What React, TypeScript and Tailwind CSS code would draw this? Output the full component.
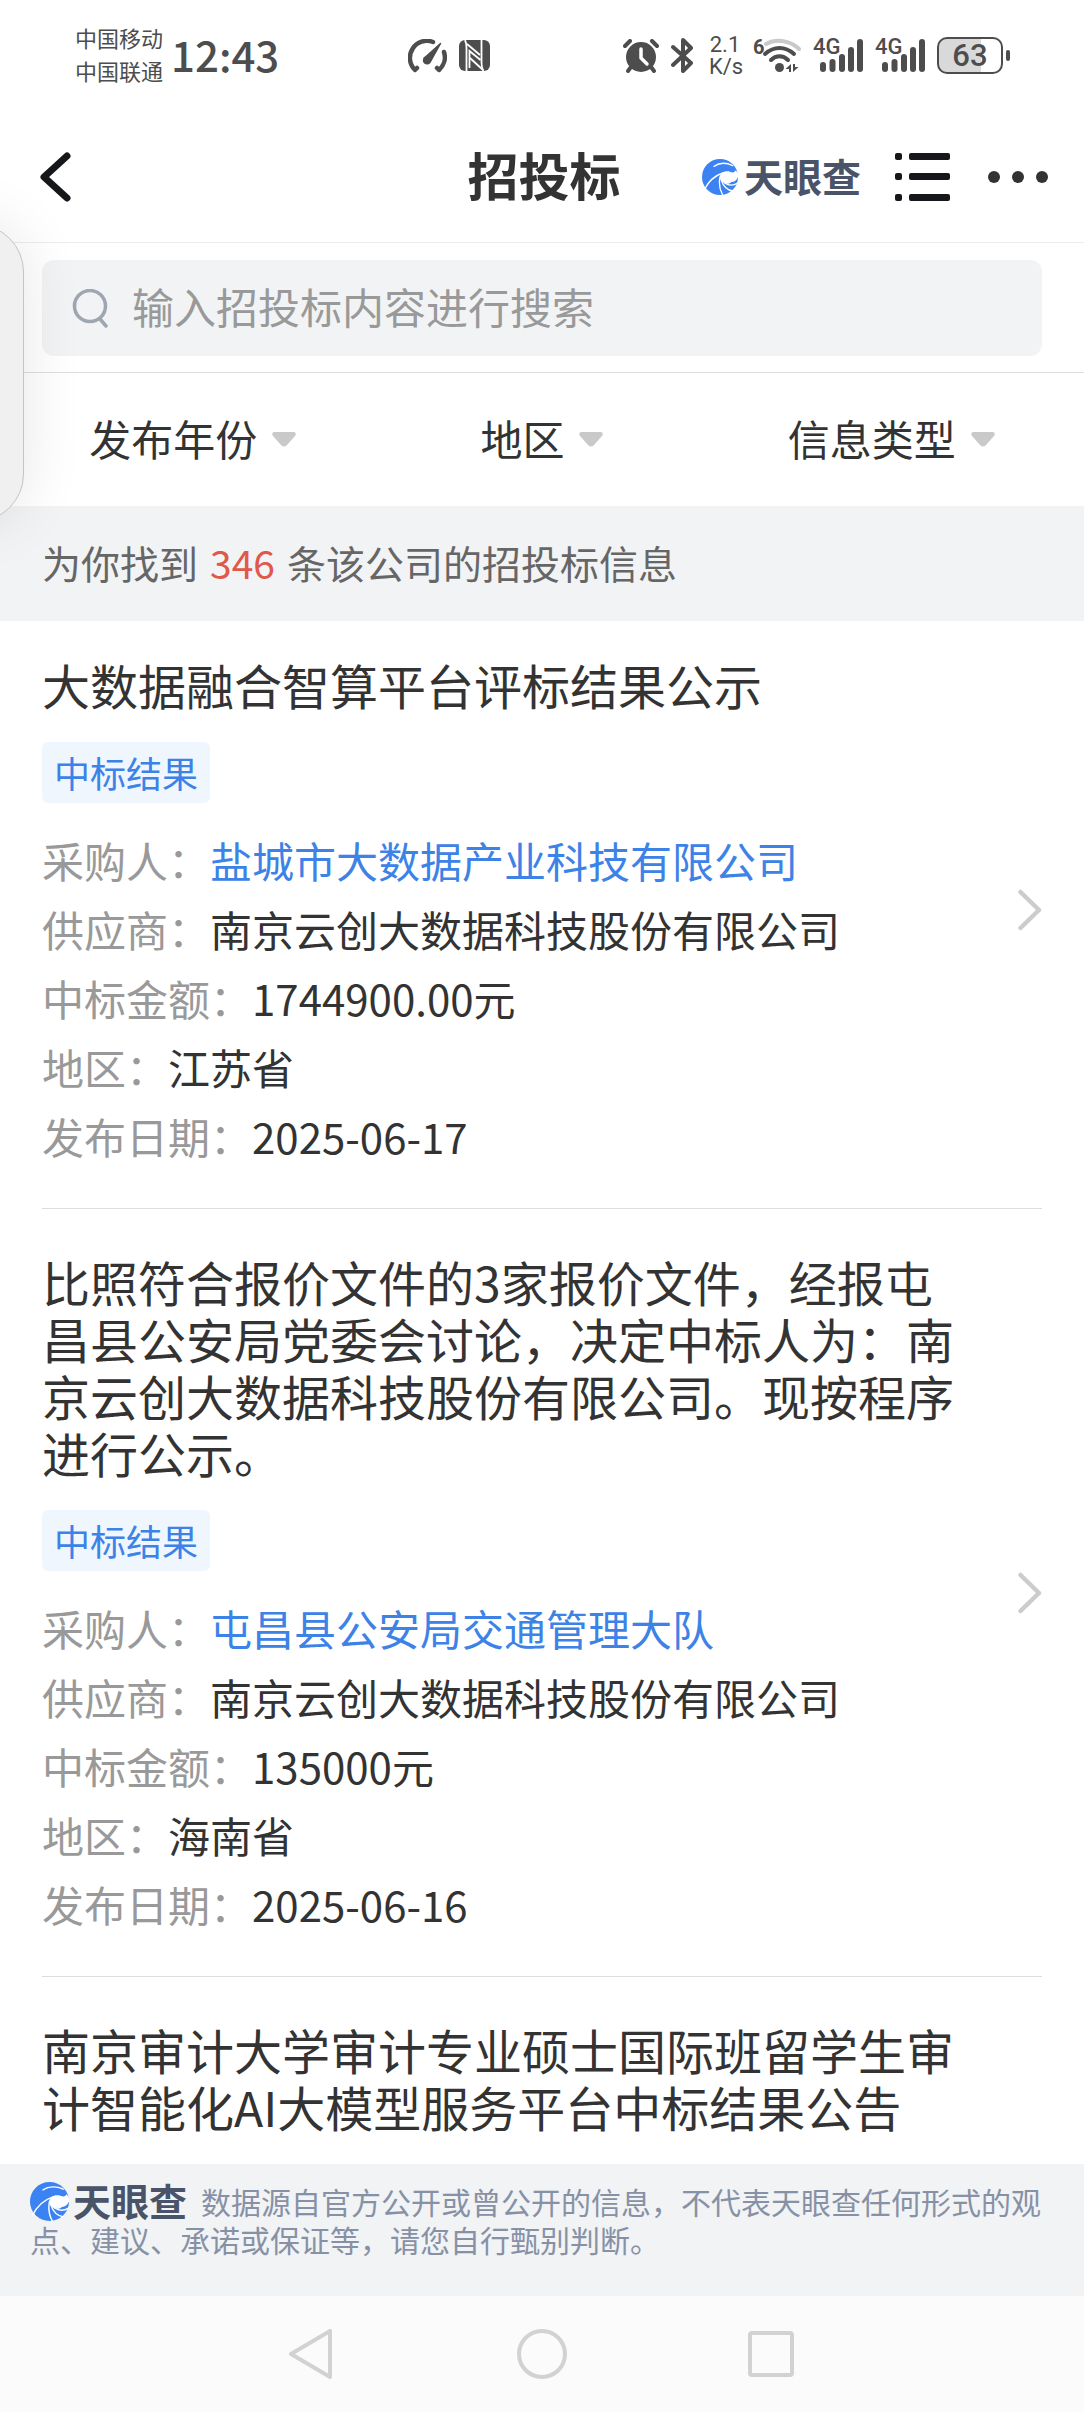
import type { ReactNode } from "react";

const SUPPLIER = "南京云创大数据科技股份有限公司";

type Field = {
  label: string;
  value: string;
  href?: string;
};

type Bid = {
  title: string;
  tag?: string;
  fields: Field[];
};

const FILTERS = ["发布年份", "地区", "信息类型"];

const BIDS: Bid[] = [
  {
    title: "大数据融合智算平台评标结果公示",
    tag: "中标结果",
    fields: [
      { label: "采购人", value: "盐城市大数据产业科技有限公司", href: "#yancheng" },
      { label: "供应商", value: SUPPLIER },
      { label: "中标金额", value: "1744900.00元" },
      { label: "地区", value: "江苏省" },
      { label: "发布日期", value: "2025-06-17" },
    ],
  },
  {
    title:
      "比照符合报价文件的3家报价文件，经报屯昌县公安局党委会讨论，决定中标人为：南京云创大数据科技股份有限公司。现按程序进行公示。",
    tag: "中标结果",
    fields: [
      { label: "采购人", value: "屯昌县公安局交通管理大队", href: "#tunchang" },
      { label: "供应商", value: SUPPLIER },
      { label: "中标金额", value: "135000元" },
      { label: "地区", value: "海南省" },
      { label: "发布日期", value: "2025-06-16" },
    ],
  },
  {
    title: "南京审计大学审计专业硕士国际班留学生审计智能化AI大模型服务平台中标结果公告",
    fields: [],
  },
];

function Signal() {
  return (
    <span className="relative block h-[37px] w-[50px]">
      <svg viewBox="0 0 50 37" fill="#4d4d4d" className="h-full w-full" aria-hidden="true">
        <rect x="7" y="25" width="6" height="10" rx="3" />
        <rect x="16.5" y="22" width="6" height="13" rx="3" />
        <rect x="26" y="17" width="6" height="18" rx="3" />
        <rect x="35" y="10" width="6" height="25" rx="3" />
        <rect x="44" y="2" width="6" height="33" rx="3" />
      </svg>
      <span className="absolute left-0 top-0 font-['Roboto'] text-[22px] font-medium leading-[20px]">
        4G
      </span>
    </span>
  );
}

function StatusBar() {
  return (
    <div className="flex h-[111px] items-center justify-between pl-[75px] pr-[74px] text-[#4d4d4d]">
      <div className="flex items-center gap-2 pb-1">
        <div className="text-[22px] leading-[33px]">
          <div>中国移动</div>
          <div>中国联通</div>
        </div>
        <time className="text-[42px] font-medium leading-[48px]">12:43</time>
      </div>

      <div className="flex items-center gap-3">
        <svg viewBox="0 0 39 34" className="h-[34px] w-[39px]" fill="none" stroke="#4d4d4d" strokeWidth="4.5" strokeLinecap="round" strokeLinejoin="round" aria-hidden="true">
          <path d="M9 29 L7 31 A17 17 0 0 1 25 3" />
          <path d="M36 13 A17 17 0 0 1 31 31 L29 29" />
          <path d="M32.5 4.5 L17.5 18 A3.6 3.6 0 1 0 22.5 22.5 Z" fill="#4d4d4d" strokeWidth="1.5" />
        </svg>
        <svg viewBox="0 0 31 31" className="mr-1 h-[31px] w-[31px]" aria-hidden="true">
          <rect width="31" height="31" rx="6" fill="#4d4d4d" />
          <g fill="none" stroke="#fff" strokeWidth="1.8">
            <path d="M6 0 Q7.5 3 7.5 8 V31" />
            <path d="M8 4 L21 15" />
            <path d="M22.5 0 V22 Q22.5 28 24.5 31" />
            <path d="M10.5 28 V11 L21.5 20" />
            <path d="M11 18 L24 30" />
          </g>
        </svg>
      </div>

      <div className="flex items-center gap-3">
        <svg viewBox="0 0 36 34" className="h-[34px] w-9" fill="none" stroke="#4d4d4d" strokeWidth="4" strokeLinecap="round" aria-hidden="true">
          <circle cx="18" cy="18" r="15" fill="#4d4d4d" stroke="none" />
          <path d="M2 7 L7 2 M34 7 L29 2 M8 28 L5 32 M28 28 L31 32" />
          <path d="M18 10 V19 L24 25" stroke="#fff" strokeWidth="3.5" strokeLinejoin="round" />
        </svg>
        <svg viewBox="0 0 22 35" className="mr-1 h-[35px] w-[22px]" fill="none" stroke="#4d4d4d" strokeWidth="4" strokeLinecap="round" strokeLinejoin="round" aria-hidden="true">
          <path d="M2 9 L20 25 L12 33 V2 L20 10 L2 27" />
        </svg>
        <div className="w-8 text-center font-['Roboto'] text-[22px] leading-[22px]">
          <div>2.1</div>
          <div>K/s</div>
        </div>
        <span className="relative block h-[37px] w-12">
          <svg viewBox="0 0 48 37" className="h-full w-full" fill="none" stroke="#4d4d4d" strokeWidth="4" strokeLinecap="round" aria-hidden="true">
            <path d="M13 7 C24 1 38 4 46 12" stroke="#c9c9c9" />
            <path d="M12 17 C21 9 32 9 41 17" />
            <path d="M18 23 C23 18 30 18 35 23" />
            <circle cx="26.5" cy="30.5" r="4.5" fill="#4d4d4d" stroke="none" />
            <path d="M38 27 V35 H36 V32 H32.5 Z M40 35 V27 H42 V30 H45.5 Z" fill="#4d4d4d" stroke="none" />
          </svg>
          <span className="absolute left-0 top-0 font-['Roboto'] text-[20px] font-bold leading-[20px]">
            6
          </span>
        </span>
        <Signal />
        <Signal />
        <div className="flex items-center gap-[3px]">
          <div className="flex h-[37px] w-[66px] items-center justify-center rounded-[10px] border-2 border-[#4d4d4d] bg-linear-to-r from-[#d9d9d9] from-68% to-white to-68% font-['Roboto'] text-[31px] font-medium leading-8">
            63
          </div>
          <div className="h-[11px] w-1 rounded-full bg-[#4d4d4d]" />
        </div>
      </div>
    </div>
  );
}

function Swirl({ className }: { className: string }) {
  return (
    <svg viewBox="0 0 108 108" className={className} aria-hidden="true">
      <circle cx="54" cy="54" r="54" fill="#3b82f2" />
      <path
        d="M54 60 C50 44 66 33 84 38 C91 41 97 42 101 34 L109 44 L108 54 C104 64 97 69 88 69 C82 78 62 76 54 60 Z"
        fill="#fff"
      />
      <g fill="none" stroke="#fff" strokeWidth="4" strokeLinecap="round">
        <path d="M36 22 C52 11 74 11 92 20" />
        <path d="M62 42 C38 50 18 70 7 92" />
        <path d="M54 54 C50 74 54 94 62 108" />
        <path d="M58 64 C64 82 76 94 92 96" />
        <path d="M68 72 C80 80 94 80 107 72" />
      </g>
    </svg>
  );
}

function Header() {
  return (
    <header className="grid h-[132px] grid-cols-[1fr_auto_1fr] items-center border-b border-[#ececec] pl-10 pr-9">
      <button type="button" aria-label="返回" className="justify-self-start">
        <svg viewBox="0 0 32 52" className="h-[52px] w-8" fill="none" stroke="#15171b" strokeWidth="7" strokeLinecap="round" strokeLinejoin="round" aria-hidden="true">
          <path d="M27 5 L4 26 L27 47" />
        </svg>
      </button>
      <h1 className="pb-1.5 text-[51px] font-bold leading-[60px] text-[#333]">招投标</h1>
      <div className="flex items-center justify-end">
        <a href="#home" className="flex items-center gap-1.5 text-[39px] font-bold leading-[48px] text-[#4a5468]">
          <Swirl className="h-9 w-9" />
          <span className="pb-1">天眼查</span>
        </a>
        <button type="button" aria-label="列表" className="ml-[34px]">
          <svg viewBox="0 0 55 48" className="h-12 w-[55px]" fill="#15171b" aria-hidden="true">
            <rect width="7" height="7" rx="2" />
            <rect x="14" width="41" height="7" rx="2" />
            <rect y="20" width="7" height="7" rx="2" />
            <rect x="14" y="20" width="41" height="7" rx="2" />
            <rect y="41" width="7" height="7" rx="2" />
            <rect x="14" y="41" width="41" height="7" rx="2" />
          </svg>
        </button>
        <button type="button" aria-label="更多" className="ml-[38px]">
          <svg viewBox="0 0 60 12" className="h-3 w-[60px]" fill="#333" aria-hidden="true">
            <circle cx="6" cy="6" r="6" />
            <circle cx="30" cy="6" r="6" />
            <circle cx="54" cy="6" r="6" />
          </svg>
        </button>
      </div>
    </header>
  );
}

function SearchBar() {
  return (
    <div className="border-b border-[#ddd] px-[42px] pb-4 pt-[17px]">
      <label className="flex h-24 items-center gap-[23px] rounded-xl bg-[#f1f3f5] pl-[30px]">
        <svg viewBox="0 0 37 39" className="h-[39px] w-[37px] shrink-0" fill="none" stroke="#9ea7b1" strokeWidth="3.5" strokeLinecap="round" aria-hidden="true">
          <circle cx="18" cy="17" r="15.5" />
          <path d="M28 30 L34 37" />
        </svg>
        <input
          type="search"
          aria-label="搜索招投标"
          placeholder="输入招投标内容进行搜索"
          className="h-full min-w-0 flex-1 bg-transparent pb-1.5 text-[42px] outline-none placeholder:text-[#999]"
        />
      </label>
    </div>
  );
}

function Filters() {
  return (
    <div className="grid h-[133px] grid-cols-3 items-center px-[18px]">
      {FILTERS.map((name) => (
        <label key={name} className="flex items-center justify-center gap-3.5">
          <select
            aria-label={name}
            className="appearance-none bg-transparent pb-1 text-[42px] leading-[60px] text-[#333] outline-none"
          >
            <option>{name}</option>
          </select>
          <svg viewBox="0 0 24 15" className="h-[15px] w-6" fill="#c9c9c9" aria-hidden="true">
            <path d="M2 0 H22 Q25 1 23 4 L15 13 Q12 16 9 13 L1 4 Q-1 1 2 0 Z" />
          </svg>
        </label>
      ))}
    </div>
  );
}

function BidItem({ bid }: { bid: Bid }) {
  return (
    <li className="flex items-center justify-between border-b border-[#ddd] last:border-b-0">
      <div className="w-[920px] pb-[38px] pt-11">
        <h2 className="text-[48px] leading-[57px] text-[#333]">{bid.title}</h2>
        {bid.tag && (
          <span className="mt-[29px] flex h-[61px] w-fit items-center rounded-md bg-[#eff6fe] px-3 pb-0.5 text-[36px] text-[#3d82e6]">
            {bid.tag}
          </span>
        )}
        {bid.fields.length > 0 && (
          <dl className="mt-[22px] text-[42px] leading-[69px]">
            {bid.fields.map((field) => (
              <div key={field.label} className="flex">
                <dt className="text-[#999]">{field.label}：</dt>
                <dd className="text-[#333]">
                  {field.href ? (
                    <a href={field.href} className="text-[#3d82e6]">
                      {field.value}
                    </a>
                  ) : (
                    field.value
                  )}
                </dd>
              </div>
            ))}
          </dl>
        )}
      </div>
      {bid.fields.length > 0 && (
        <a href="#detail" aria-label="查看详情">
          <svg viewBox="0 0 24 42" className="h-[42px] w-6" fill="none" stroke="#ccc" strokeWidth="4.5" strokeLinecap="round" strokeLinejoin="round" aria-hidden="true">
            <path d="M2.5 3 L21 21 L2.5 39" />
          </svg>
        </a>
      )}
    </li>
  );
}

function NavButton({ label, children }: { label: string; children: ReactNode }) {
  return (
    <button type="button" aria-label={label}>
      <svg viewBox="0 0 50 50" className="h-[50px] w-[50px]" fill="none" stroke="#d2d2d2" strokeWidth="4" strokeLinejoin="round" aria-hidden="true">
        {children}
      </svg>
    </button>
  );
}

export default function App() {
  return (
    <div className="relative flex min-h-screen flex-col overflow-hidden bg-white font-['Noto_Sans_CJK_SC',sans-serif]">
      <StatusBar />
      <Header />
      <SearchBar />
      <Filters />

      <p className="relative flex h-[115px] items-center gap-3 bg-[#f1f3f5] px-[42px] pb-0.5 text-[39px] text-[#666]">
        为你找到 <span className="text-[#e0584a]">346</span> 条该公司的招投标信息
      </p>

      <main className="-mt-[9px] -mb-4 flex-1 px-[42px]">
        <ul>
          {BIDS.map((bid) => (
            <BidItem key={bid.title} bid={bid} />
          ))}
        </ul>
      </main>

      <footer className="relative">
        <p className="h-[132px] bg-[#f1f3f5] px-[30px] pt-[18px] text-[30px] leading-[38px] text-[#8791a5]">
          <span className="mr-3.5 inline-flex h-[38px] items-center gap-1 align-top text-[38px] font-bold text-[#4a5468]">
            <Swirl className="h-[39px] w-[39px]" />
            <span className="pb-0.5">天眼查</span>
          </span>
          数据源自官方公开或曾公开的信息，不代表天眼查任何形式的观点、建议、承诺或保证等，请您自行甄别判断。
        </p>
        <nav className="flex h-[116px] items-center justify-center gap-[180px] bg-[#fbfbfb]">
          <NavButton label="返回">
            <path d="M4 25 L43 2 V48 Z" />
          </NavButton>
          <NavButton label="主页">
            <circle cx="25" cy="25" r="23" />
          </NavButton>
          <NavButton label="最近任务">
            <rect x="3" y="4" width="42" height="42" rx="2" />
          </NavButton>
        </nav>
      </footer>

      {/* edge of the floating side panel */}
      <div
        aria-hidden="true"
        className="absolute -left-24 top-56 h-[298px] w-[120px] rounded-[48px] border border-[#c4c4c4] bg-[#f0f0f0] shadow-[0_0_60px_rgba(0,0,0,0.1)]"
      />
    </div>
  );
}
